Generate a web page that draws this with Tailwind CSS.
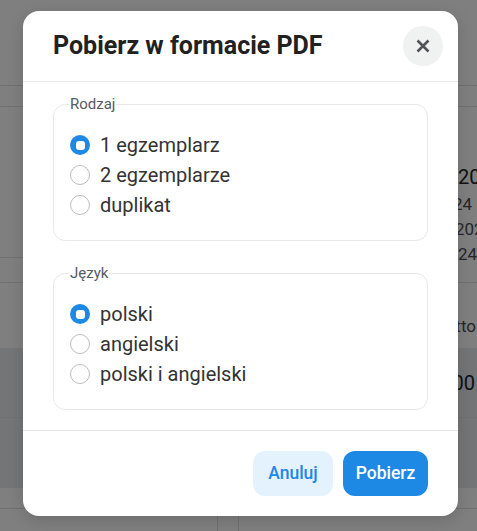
<!DOCTYPE html>
<html lang="pl">
<head>
<meta charset="utf-8">
<script src="https://cdn.jsdelivr.net/npm/@tailwindcss/browser@4"></script>
</head>
<body class="m-0 font-['Roboto',sans-serif]">
<div class="relative w-[477px] h-[531px] overflow-hidden bg-white text-[#212529]">
  <!-- page behind the dialog -->
  <div class="flex flex-col">
    <div class="h-[86px] border-b border-[#dee2e6]"></div>
    <div class="h-[21px] border-b border-[#dee2e6]"></div>
    <div class="h-[151px] border-b border-[#dee2e6] pl-[458px] pt-[56px] whitespace-nowrap">
      <div class="text-[20px] leading-[28px]">2024</div>
      <div class="text-[17px] leading-[25px] mt-[1px] text-[#495057] -ml-[5px]">24</div>
      <div class="text-[17px] leading-[25px] text-[#495057] -ml-[3px]">2024</div>
      <div class="text-[17px] leading-[25px] text-[#495057]">24</div>
    </div>
    <div class="h-[25px] border-b border-[#dee2e6]"></div>
    <div class="h-[65px] text-right pr-[1px] pt-[31px] text-[17px] leading-[25px] text-[#495057] whitespace-nowrap">netto</div>
    <div class="h-[70px] bg-[#e8ebee] border-b border-[#dee2e6] text-right pr-[2px] pt-[21px] text-[20px] leading-[28px] whitespace-nowrap">1000</div>
    <div class="h-[70px] bg-[#e8ebee]"></div>
    <div class="h-[21px] border-b border-[#dee2e6]"></div>
    <div class="flex h-[22px]">
      <div class="w-[218px] shrink-0 border-r border-[#dee2e6]"></div>
      <div class="w-[21px] shrink-0 border-r border-[#dee2e6]"></div>
      <div class="pl-[34px] pt-[19px] text-[16px] leading-[20px] font-medium whitespace-nowrap">Składnik</div>
    </div>
  </div>
  <!-- overlay -->
  <div class="absolute inset-0 bg-black/50"></div>
  <!-- dialog -->
  <div class="absolute left-[23px] top-[11px] w-[435px] h-[505px] bg-white rounded-[16px] flex flex-col shadow-[0_4px_16px_rgba(0,0,0,0.15)]">
    <header class="h-[71px] shrink-0 border-b border-[#e9e9e9] flex items-center justify-between pl-[30px] pr-[15px]">
      <h2 class="text-[25px] font-bold leading-[32px] text-[#212121]">Pobierz w formacie PDF</h2>
      <button class="w-10 h-10 rounded-full bg-[#f0f1f1] flex items-center justify-center">
        <svg width="14" height="14" viewBox="0 0 14 14" fill="none" stroke="#50535a" stroke-width="2.6"><path d="M1.5 1.5 12.5 12.5M12.5 1.5 1.5 12.5"/></svg>
      </button>
    </header>
    <div class="flex-1 px-[30px] flex flex-col gap-[24px] pt-[14px]">
      <fieldset class="h-[145px] border border-[#e8e8e8] rounded-[12px] px-4 pt-[23px] m-0">
        <legend class="-ml-[1px] px-[1px] text-[15px] leading-[16px] text-[#555b66]">Rodzaj</legend>
        <div class="flex flex-col gap-[10px]">
          <label class="flex items-center gap-[10px] text-[20px] leading-[20px] text-[#333333]"><span class="w-5 h-5 rounded-full bg-[#1e88e5] flex items-center justify-center"><span class="w-[9px] h-[9px] rounded-[3px] bg-white"></span></span>1 egzemplarz</label>
          <label class="flex items-center gap-[10px] text-[20px] leading-[20px] text-[#333333]"><span class="w-5 h-5 rounded-full border border-[#bdbdbd] bg-white"></span>2 egzemplarze</label>
          <label class="flex items-center gap-[10px] text-[20px] leading-[20px] text-[#333333]"><span class="w-5 h-5 rounded-full border border-[#bdbdbd] bg-white"></span>duplikat</label>
        </div>
      </fieldset>
      <fieldset class="h-[145px] border border-[#e8e8e8] rounded-[12px] px-4 pt-[23px] m-0">
        <legend class="-ml-[1px] px-[1px] text-[15px] leading-[16px] text-[#555b66]">Język</legend>
        <div class="flex flex-col gap-[10px]">
          <label class="flex items-center gap-[10px] text-[20px] leading-[20px] text-[#333333]"><span class="w-5 h-5 rounded-full bg-[#1e88e5] flex items-center justify-center"><span class="w-[9px] h-[9px] rounded-[3px] bg-white"></span></span>polski</label>
          <label class="flex items-center gap-[10px] text-[20px] leading-[20px] text-[#333333]"><span class="w-5 h-5 rounded-full border border-[#bdbdbd] bg-white"></span>angielski</label>
          <label class="flex items-center gap-[10px] text-[20px] leading-[20px] text-[#333333]"><span class="w-5 h-5 rounded-full border border-[#bdbdbd] bg-white"></span>polski i angielski</label>
        </div>
      </fieldset>
    </div>
    <footer class="h-[86px] shrink-0 border-t border-[#e8e8e8] flex items-start justify-end gap-[10px] pt-[20px] pr-[30px]">
      <button class="w-[80px] h-[45px] rounded-[12px] bg-[#e3f2fd] text-[#1e88e5] text-[17.5px] font-medium">Anuluj</button>
      <button class="w-[85px] h-[45px] rounded-[12px] bg-[#1e88e5] text-white text-[17.5px] font-medium">Pobierz</button>
    </footer>
  </div>
</div>
</body>
</html>
